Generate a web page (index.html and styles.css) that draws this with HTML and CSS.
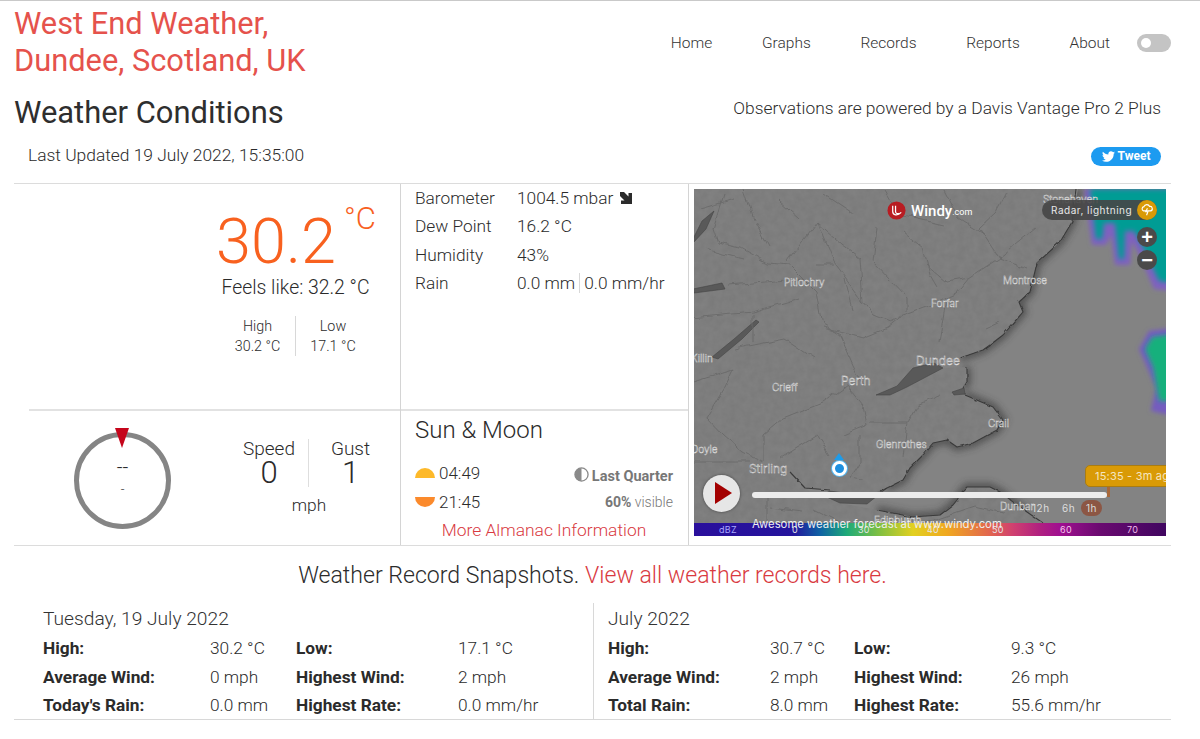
FILE: index.html
```html
<!DOCTYPE html>
<html lang="en">
<head>
<meta charset="utf-8">
<title>West End Weather</title>
<link rel="stylesheet" href="styles.css">
</head>
<body>
<div class="page">
  <header class="top">
    <h1 class="site-title">West End Weather,<br>Dundee, Scotland, UK</h1>
    <nav class="nav">
      <a>Home</a><a>Graphs</a><a>Records</a><a>Reports</a><a>About</a>
      <span class="toggle"><span class="knob"></span></span>
    </nav>
  </header>
  <div class="head-row">
    <h2 class="page-title">Weather Conditions</h2>
    <div class="powered">Observations are powered by a Davis Vantage Pro 2 Plus</div>
  </div>
  <div class="update-row">
    <div class="updated">Last Updated 19 July 2022, 15:35:00</div>
    <a class="tweet"><svg class="bird" viewBox="0 0 24 24"><path d="M23.954 4.569c-.885.389-1.83.654-2.825.775 1.014-.611 1.794-1.574 2.163-2.723-.951.555-2.005.959-3.127 1.184-.896-.959-2.173-1.559-3.591-1.559-2.717 0-4.92 2.203-4.92 4.917 0 .39.045.765.127 1.124C7.691 8.094 4.066 6.13 1.64 3.161c-.427.722-.666 1.561-.666 2.475 0 1.71.87 3.213 2.188 4.096-.807-.026-1.566-.248-2.228-.616v.061c0 2.385 1.693 4.374 3.946 4.827-.413.111-.849.171-1.296.171-.314 0-.615-.03-.916-.086.631 1.953 2.445 3.377 4.604 3.417-1.68 1.319-3.809 2.105-6.102 2.105-.39 0-.779-.023-1.17-.067 2.189 1.394 4.768 2.209 7.557 2.209 9.054 0 13.999-7.496 13.999-13.986 0-.209 0-.42-.015-.63.961-.689 1.8-1.56 2.46-2.548l-.047-.02z"/></svg>Tweet</a>
  </div>

  <section class="panels">
    <div class="left">
      <div class="temp-cell">
        <div class="temp-box">
          <div class="temp"><span class="temp-num">30.2</span><span class="temp-unit">°C</span></div>
          <div class="feels">Feels like: 32.2 °C</div>
          <div class="hilo">
            <div class="hilo-item"><div>High</div><div>30.2 °C</div></div>
            <div class="hilo-item"><div>Low</div><div>17.1 °C</div></div>
          </div>
        </div>
      </div>
      <div class="wind-cell">
        <div class="gauge">
          <span class="gauge-pointer"></span>
          <span class="gauge-main">--</span>
          <span class="gauge-sub">-</span>
        </div>
        <div class="wind">
          <div class="wind-cols">
            <div class="wind-col"><div class="wind-label">Speed</div><div class="wind-val">0</div></div>
            <div class="wind-col"><div class="wind-label">Gust</div><div class="wind-val">1</div></div>
          </div>
          <div class="wind-unit">mph</div>
        </div>
      </div>
    </div>

    <div class="mid">
      <div class="obs">
        <div class="obs-row"><span class="obs-label">Barometer</span><span>1004.5 mbar</span>
          <svg class="trend" viewBox="0 0 12 12"><path d="M0 0 H4 L8.5 4.5 V1 H12 V12 H1 V8.5 H4.5 L0 4 Z"/></svg></div>
        <div class="obs-row"><span class="obs-label">Dew Point</span><span>16.2 °C</span></div>
        <div class="obs-row"><span class="obs-label">Humidity</span><span>43%</span></div>
        <div class="obs-row"><span class="obs-label">Rain</span><span class="rain-a">0.0 mm</span><span class="rain-b">0.0 mm/hr</span></div>
      </div>
      <div class="almanac">
        <h3 class="almanac-title">Sun &amp; Moon</h3>
        <div class="almanac-row">
          <span class="sun-time"><span class="sun sun-up"></span>04:49</span>
          <span class="moon"><svg class="moon-icon" viewBox="0 0 16 16"><circle cx="8" cy="8" r="7" fill="#fff" stroke="#8a8a8a" stroke-width="1.4"/><path d="M8 1a7 7 0 0 0 0 14z" fill="#8a8a8a"/></svg><b>Last Quarter</b></span>
        </div>
        <div class="almanac-row">
          <span class="sun-time"><span class="sun sun-down"></span>21:45</span>
          <span class="visible"><b>60%</b> visible</span>
        </div>
        <a class="more">More Almanac Information</a>
      </div>
    </div>

    <div class="right">
      <div class="map">
        <svg class="map-art" viewBox="0 0 472 347" preserveAspectRatio="none">
          <defs>
            <filter id="blurEdge" filterUnits="userSpaceOnUse" x="340" y="-20" width="160" height="280"><feGaussianBlur stdDeviation="2.2"/></filter>
            <filter id="blurCore" filterUnits="userSpaceOnUse" x="340" y="-20" width="160" height="280"><feGaussianBlur stdDeviation="2.6"/></filter>
            <filter id="shadow" filterUnits="userSpaceOnUse" x="0" y="0" width="472" height="347"><feGaussianBlur stdDeviation="3.5"/></filter>
            <filter id="wiggle" filterUnits="userSpaceOnUse" x="0" y="0" width="472" height="347">
              <feTurbulence type="fractalNoise" baseFrequency=".07" numOctaves="2" seed="4" result="n"/>
              <feDisplacementMap in="SourceGraphic" in2="n" scale="7" xChannelSelector="R" yChannelSelector="G"/>
            </filter>
            <filter id="wiggleFine" filterUnits="userSpaceOnUse" x="0" y="0" width="472" height="347">
              <feTurbulence type="fractalNoise" baseFrequency=".12" numOctaves="2" seed="9" result="n"/>
              <feDisplacementMap in="SourceGraphic" in2="n" scale="3" xChannelSelector="R" yChannelSelector="G"/>
            </filter>
            <filter id="terrain" filterUnits="userSpaceOnUse" x="0" y="0" width="472" height="347" color-interpolation-filters="sRGB">
              <feTurbulence type="fractalNoise" baseFrequency=".14" numOctaves="3" seed="12"/>
              <feColorMatrix type="matrix" values="1.4 0 0 0 -.2  1.4 0 0 0 -.2  1.4 0 0 0 -.2  0 0 0 0 1"/>
            </filter>
            <clipPath id="landClip"><path d="M384 0 L378 33 L366 53 L343 74 L336 103 L325 113 L329 123 L309 146 L296 156 L289 161 L266 169 L245 172 L223 172 L219 179 L203 196 L182 206 L196 206 L213 198 L249 179 L273 178 L273 193 L269 199 L263 201 L256 206 L271 206 L299 218 L309 231 L303 241 L279 254 L263 258 L253 251 L239 254 L229 266 L216 279 L209 291 L193 299 L186 303 L165 306 L136 301 L111 299 L96 283 L118 305 L146 314 L166 318 L183 321 L219 328 L246 326 L259 316 L263 311 L268 303 L273 298 L296 298 L306 303 L333 323 L349 334 L349 347 L0 347 L0 0 Z"/></clipPath>
            <linearGradient id="scale" x1="0" x2="1" y1="0" y2="0">
              <stop offset="0" stop-color="#2a0f9c"/>
              <stop offset=".21" stop-color="#24149c"/>
              <stop offset=".267" stop-color="#0f62a4"/>
              <stop offset=".324" stop-color="#1eaa78"/>
              <stop offset=".394" stop-color="#82c040"/>
              <stop offset=".464" stop-color="#e2d020"/>
              <stop offset=".536" stop-color="#f0a820"/>
              <stop offset=".633" stop-color="#e06052"/>
              <stop offset=".676" stop-color="#d04070"/>
              <stop offset=".733" stop-color="#b02080"/>
              <stop offset=".775" stop-color="#a01090"/>
              <stop offset=".86" stop-color="#6a0a70"/>
              <stop offset="1" stop-color="#400660"/>
            </linearGradient>
          </defs>
          <rect width="472" height="347" fill="#838383"/>
          <!-- radar -->
          <g filter="url(#blurEdge)">
            <path d="M390 0 L480 0 L480 102 L460 100 L447 70 L438 52 L436 76 L421 76 L417 46 L412 56 L398 56 Z" fill="#7f60c0"/>
            <path d="M445 160 L455 142 L480 139 L480 227 L457 222 L462 199 L452 176 Z" fill="#745cc0"/>
          </g>
          <g filter="url(#blurCore)">
            <path d="M396 0 L480 0 L480 94 L465 92 L452 64 L440 42 L431 42 L430 70 L425 70 L421 34 L410 34 L408 50 L402 50 Z" fill="#069c94"/>
            <path d="M451 160 L458 148 L480 145 L480 212 L465 212 L459 178 Z" fill="#12b07c"/>
          </g>
          <!-- coast shadow, then land on top -->
          <path d="M384 0 L378 33 L366 53 L343 74 L336 103 L325 113 L329 123 L309 146 L296 156 L289 161 L266 169 M273 178 L273 193 L269 199 M271 206 L299 218 L309 231 L303 241 L279 254 L263 258 L253 251 L239 254 L229 266 L216 279 L209 291 L193 299 M183 321 L219 328 L246 326 L259 316 L263 311 L268 303 L273 298 L296 298 L306 303 L333 323" fill="none" stroke="#333" stroke-width="8" opacity=".6" filter="url(#shadow)"/>
          <g clip-path="url(#landClip)">
            <rect width="472" height="347" fill="#7e7e7e"/>
            <rect width="472" height="347" filter="url(#terrain)" opacity=".025"/>
          </g>
          <!-- estuaries and lochs -->
          <g fill="#595959" stroke="#454545" stroke-width=".6">
            <path d="M182 206 L203 197 L219 179 L240 174 L249 179 L213 198 L196 206 Z"/>
            <path d="M136 302 L165 306 L186 303 L193 299 L173 315 L146 314 L128 306 Z"/>
            <path d="M-1 100 L28 94 L31 100 L0 104 Z"/>
            <path d="M-1 50 L8 32 L20 22 L12 40 L-1 54 Z"/>
            <path d="M18 168 L40 150 L62 131 L65 133 L48 150 L24 170 Z"/>
            <path d="M258 203 L264 201 L270 199 L271 205 L260 206 Z"/>
          </g>
          <path d="M382 0 L378 33 L366 53 L343 74 L336 103 L325 113 L329 123 L309 146 L296 156 L289 161 L266 169 M273 178 L273 193 L269 199 M271 206 L299 218 L309 231 L303 241 L279 254 L263 258 L253 251 L239 254 L229 266 L216 279 L209 291 L193 299 L186 303 M96 283 L111 299 L136 301 M183 321 L219 328 L246 326 L259 316 L263 311 L268 303 L273 298 L296 298 L306 303 L333 323 L349 334" fill="none" stroke="#3a3a3a" stroke-width="1.1" stroke-linejoin="round" filter="url(#wiggleFine)"/>
          <!-- rivers and roads -->
          <g fill="none" stroke="#6a6a6a" stroke-width=".9" stroke-linejoin="round" filter="url(#wiggle)">
            <path d="M29 6 L19 39 L24 54 L46 59 L73 74 L96 76 L109 89 L123 103 L129 136 L146 146 L159 176 L170 196"/>
            <path d="M123 33 L93 73"/>
            <path d="M123 33 L139 73 L169 113 L179 126 L196 133 L209 126 L236 116 L262 105 L275 89 L305 69 L342 39"/>
            <path d="M139 76 L123 76"/>
            <path d="M169 113 L166 69 L149 56 L123 33"/>
            <path d="M209 43 L229 59 L236 86 L243 98"/>
            <path d="M183 39 L179 73 L213 109 L213 122"/>
            <path d="M129 139 L169 149 L193 139 L209 126"/>
            <path d="M-4 129 L59 123 L106 109"/>
            <path d="M33 96 L73 93 L109 89"/>
            <path d="M59 125 L59 153"/>
            <path d="M0 193 L39 181 L30 200 L13 229 L29 246 L49 263 L69 273"/>
            <path d="M69 273 L69 246 L89 229 L129 213 L153 196"/>
            <path d="M153 196 L169 216 L173 236 L149 246 M166 246 L166 273 L156 289 L169 291"/>
            <path d="M86 269 L123 246 L136 266"/>
            <path d="M-1 273 L56 273"/>
            <path d="M176 233 L213 233 L223 216 L246 206"/>
            <path d="M213 233 L209 269"/>
            <path d="M73 303 L73 333"/>
            <path d="M76 319 L109 323"/>
            <path d="M232 76 L252 93 L275 89"/>
            <path d="M252 113 L245 153"/>
            <path d="M312 3 L302 23 L285 39 L305 69 L332 79"/>
            <path d="M292 139 L305 133"/>
            <path d="M6 20 L40 10 M50 0 L60 30 M85 12 L105 30 M130 5 L160 25 M190 0 L205 25 L250 35"/>
            <path d="M250 0 L265 30 L290 45 M120 320 L150 335 M230 335 L280 318 L310 325"/>
            <path d="M62 33 L75 58 M150 90 L158 120 M10 60 L50 70 M40 160 L90 150 L120 170"/>
          </g>
          <g class="city" font-family="Inter, 'Liberation Sans', sans-serif" fill="#4a4a4a" stroke="#ececec" stroke-width=".4" font-size="10">
            <text x="90" y="97">Pitlochry</text>
            <text x="237" y="118">Forfar</text>
            <text x="309" y="95">Montrose</text>
            <text x="349" y="14">Stonehaven</text>
            <text x="-3" y="173">Killin</text>
            <text x="78" y="202">Crieff</text>
            <text x="-3" y="264">Doyle</text>
            <text x="182" y="259">Glenrothes</text>
            <text x="294" y="238">Crail</text>
            <text x="306" y="321">Dunbar</text>
            <text x="180" y="335">Edinburgh</text>
            <text x="222" y="176" font-size="12">Dundee</text>
            <text x="147" y="196" font-size="12">Perth</text>
            <text x="55" y="284" font-size="12">Stirling</text>
          </g>
          <rect y="334" width="472" height="13" fill="url(#scale)"/>
        </svg>

        <div class="windy-logo"><svg class="windy-mark" viewBox="0 0 20 20"><circle cx="10" cy="10" r="9.5" fill="#b81c22"/><path d="M6 5 V11 C6 15 11 16 15 12 M9 5 V11 C9 13 11 14 13 13" fill="none" stroke="#fff" stroke-width="1.3"/></svg><b>Windy</b><small>.com</small></div>
        <div class="layer-pill"><span>Radar, lightning</span><span class="layer-btn"><svg viewBox="0 0 16 16"><path d="M4 9 A2.5 2.5 0 0 1 4.5 4.2 A3.5 3.5 0 0 1 11 4 A2.5 2.5 0 0 1 12 9 Z" fill="none" stroke="#fff" stroke-width="1.3"/><path d="M8.5 6 L6.5 10 H9 L7.5 14" fill="none" stroke="#fff" stroke-width="1.3"/></svg></span></div>
        <span class="zoom zoom-in">+</span>
        <span class="zoom zoom-out">−</span>
        <span class="loc-arrow"></span>
        <span class="loc-dot"></span>
        <span class="play"><span class="play-tri"></span></span>
        <span class="slider"></span>
        <span class="slider-tick"></span>
        <span class="timecode">15:35 - 3m ago</span>
        <span class="range r12">12h</span>
        <span class="range r6">6h</span>
        <span class="range r1">1h</span>
        <span class="tick t0">dBZ</span><span class="tick t1">0</span><span class="tick t2">30</span><span class="tick t3">40</span><span class="tick t4">50</span><span class="tick t5">60</span><span class="tick t6">70</span>
        <span class="promo">Awesome weather forecast at www.windy.com</span>
      </div>
    </div>
  </section>

  <h3 class="rec-title">Weather Record Snapshots. <a>View all weather records here.</a></h3>

  <section class="records">
    <div class="rec rec-day">
      <h4>Tuesday, 19 July 2022</h4>
      <div class="rec-grid">
        <b>High:</b><span>30.2 °C</span><b>Low:</b><span>17.1 °C</span>
        <b>Average Wind:</b><span>0 mph</span><b>Highest Wind:</b><span>2 mph</span>
        <b>Today's Rain:</b><span>0.0 mm</span><b>Highest Rate:</b><span>0.0 mm/hr</span>
      </div>
    </div>
    <div class="rec rec-month">
      <h4>July 2022</h4>
      <div class="rec-grid">
        <b>High:</b><span>30.7 °C</span><b>Low:</b><span>9.3 °C</span>
        <b>Average Wind:</b><span>2 mph</span><b>Highest Wind:</b><span>26 mph</span>
        <b>Total Rain:</b><span>8.0 mm</span><b>Highest Rate:</b><span>55.6 mm/hr</span>
      </div>
    </div>
  </section>
</div>
</body>
</html>
```
FILE: styles.css
```css
* { box-sizing: border-box; }
html, body { margin: 0; height: 739px; overflow: hidden; background: #fff; }
body { font-family: Roboto, "Liberation Sans", sans-serif; font-weight: 300; color: #2b2b2b; border-top: 1px solid #c9c9c9; }
h1, h2, h3, h4 { margin: 0; font-weight: 300; }
.page { padding: 0 29px 0 14px; width: 1200px; }

.top { display: flex; justify-content: space-between; height: 96px; }
.site-title { font-size: 30.8px; font-weight: 400; line-height: 37px; color: #e5524c; padding-top: 4px; }
.nav { display: flex; align-items: center; height: 84px; font-size: 15.5px; gap: 49.7px; }
.nav a { color: #333; }
.toggle { width: 34px; height: 18px; border-radius: 9px; background: #c4c4c4; margin-left: -22.7px; padding: 4px; display: flex; }
.knob { width: 10px; height: 10px; border-radius: 50%; background: #fff; }

.head-row { display: flex; justify-content: space-between; align-items: center; height: 32px; padding-right: 10px; }
.page-title { font-size: 30.9px; font-weight: 400; color: #2e2e2e; margin-top: -2px; }
.powered { font-size: 17.35px; margin-top: -11px; }

.update-row { display: flex; justify-content: space-between; align-items: center; height: 54px; padding: 0 10px 0 14px; }
.updated { font-size: 17.4px; margin-top: -2px; }
.tweet { display: flex; align-items: center; justify-content: center; gap: 3px; width: 70px; height: 19px; border-radius: 10px; background: #1d9bf0; color: #fff; font-size: 12px; font-weight: 700; }
.bird { width: 13px; height: 13px; fill: #fff; }

.panels { display: grid; grid-template-columns: 386px 289px 482px; height: 363px; border-top: 1px solid #dcdcdc; border-bottom: 1px solid #dcdcdc; }
.left { display: flex; flex-direction: column; }
.temp-cell { height: 225px; display: flex; justify-content: flex-end; padding-right: 25px; }
.temp-box { width: 157px; display: flex; flex-direction: column; align-items: center; }
.temp { display: flex; align-items: flex-start; height: 73px; color: #f8611f; margin: 20px 0 0 -2px; width: 159px; }
.temp-num { font-size: 63px; line-height: 76px; }
.temp-unit { font-size: 31px; line-height: 30px; margin-left: 8px; }
.feels { font-size: 19.4px; line-height: 22px; white-space: nowrap; margin-right: 2px; }
.hilo { display: flex; margin: 17px 3px 0 0; font-size: 14.3px; line-height: 20px; text-align: center; }
.hilo-item { width: 75px; }
.hilo-item + .hilo-item { border-left: 1px solid #d8d8d8; }

.wind-cell { flex: 1; margin-left: 15px; border-top: 2px solid #e2e2e2; display: flex; padding-left: 45px; }
.gauge { position: relative; width: 97px; height: 97px; margin-top: 21px; border: 5px solid #858585; border-radius: 50%; display: flex; flex-direction: column; align-items: center; justify-content: center; }
.gauge-pointer { position: absolute; top: -9px; left: 36px; border-left: 7px solid transparent; border-right: 7px solid transparent; border-top: 20px solid #c5051b; }
.gauge-main { font-size: 20px; line-height: 20px; margin-top: -4px; }
.gauge-sub { font-size: 13px; line-height: 20px; margin-top: 3px; }
.wind { margin-left: 71px; margin-top: 28px; width: 132px; text-align: center; }
.wind-cols { display: flex; }
.wind-col { width: 66px; height: 48px; }
.wind-col + .wind-col { border-left: 1px solid #dedede; padding-left: 18px; }
.wind-col:first-child { padding-right: 12px; }
.wind-label { font-size: 19px; line-height: 20px; }
.wind-val { font-size: 31px; line-height: 29px; margin-top: -1px; }
.wind-unit { font-size: 17.3px; margin: 8px 0 0 2px; }

.mid { display: flex; flex-direction: column; border-left: 1px solid #d4d4d4; border-right: 1px solid #d4d4d4; }
.obs { height: 225px; padding: 0 0 0 14px; }
.obs-row { display: flex; align-items: center; height: 28.3px; font-size: 17.3px; }
.obs-label { width: 102px; }
.trend { width: 12px; height: 12px; margin-left: 7px; fill: #2b2b2b; }
.rain-a { padding-right: 4px; border-right: 1px solid #d8d8d8; }
.rain-b { padding-left: 4px; }
.almanac { flex: 1; border-top: 2px solid #e2e2e2; padding: 0 15px 0 14px; }
.almanac-title { font-size: 24px; line-height: 38px; margin-bottom: 9px; }
.almanac-row { display: flex; justify-content: space-between; align-items: center; height: 29px; font-size: 17px; }
.sun-time { display: flex; align-items: center; gap: 4px; font-size: 17px; }
.sun { width: 20px; height: 10px; display: block; }
.sun-up { background: #fdb92a; border-radius: 10px 10px 0 0; }
.sun-down { background: #fb8a2c; border-radius: 0 0 10px 10px; }
.moon { display: flex; align-items: center; gap: 3px; font-size: 14.5px; color: #777; margin-top: 8px; }
.moon b, .visible b { font-weight: 700; }
.moon-icon { width: 15px; height: 15px; margin-top: -4px; }
.visible { font-size: 14px; color: #777; }
.more { display: block; text-align: center; color: #d93a3f; font-size: 17.4px; line-height: 22px; margin-top: 3px; }

.right { padding: 5px 0 0 5px; }
.map { position: relative; width: 472px; height: 347px; overflow: hidden; background: #7f7f7f; }
.map-art { display: block; width: 472px; height: 347px; }
.windy-logo { position: absolute; left: 193px; top: 12px; display: flex; align-items: center; gap: 5px; color: #fff; font-size: 15px; }
.windy-logo b { font-weight: 500; }
.windy-logo small { font-size: 9px; margin: 3px 0 0 -5px; font-weight: 400; }
.windy-mark { width: 19px; height: 19px; }
.layer-pill { position: absolute; left: 348px; top: 11px; width: 115px; height: 20px; background: rgba(70,70,70,.9); border-radius: 10px; color: #e8e8e8; font: 400 10px/20px Inter, sans-serif; letter-spacing: .5px; padding-left: 9px; }
.layer-btn { position: absolute; right: 0; top: 0; width: 20px; height: 20px; border-radius: 50%; background: #d99a06; display: flex; align-items: center; justify-content: center; }
.layer-btn svg { width: 14px; height: 14px; }
.zoom { position: absolute; left: 443px; width: 20px; height: 20px; border-radius: 50%; background: #4a4a4a; color: #fff; font: 700 20px/20px "Liberation Sans", sans-serif; text-align: center; }
.zoom-in { top: 38px; }
.zoom-out { top: 61px; }
.loc-arrow { position: absolute; left: 140px; top: 264px; border-left: 5px solid transparent; border-right: 5px solid transparent; border-bottom: 7px solid #1e9be8; }
.loc-dot { position: absolute; left: 138px; top: 272px; width: 15px; height: 15px; border-radius: 50%; background: #1e90e0; border: 3px solid #fff; box-shadow: 0 0 0 1px #55b6f0; }
.play { position: absolute; left: 9px; top: 286px; width: 37px; height: 37px; border-radius: 50%; background: #e6e6e6; box-shadow: 0 0 3px #444; }
.play-tri { position: absolute; left: 12px; top: 7px; border-left: 17px solid #a30000; border-top: 11.5px solid transparent; border-bottom: 11.5px solid transparent; }
.slider { position: absolute; left: 58px; top: 303px; width: 355px; height: 6px; border-radius: 3px; background: #ececec; }
.slider-tick { position: absolute; left: 413px; top: 298px; width: 3px; height: 10px; background: #a8683a; }
.timecode { position: absolute; left: 391px; top: 276px; width: 110px; height: 22px; border-radius: 5px; border: 1px solid #a97c12; background: #d99a06; color: #f5e6c0; font: 400 11px/20px Inter, sans-serif; letter-spacing: .2px; padding-left: 9px; white-space: nowrap; }
.range { position: absolute; top: 311px; color: #ddd; font: 400 10px/16px Inter, sans-serif; padding: 0 5px; letter-spacing: .5px; }
.r12 { left: 333px; }
.r6 { left: 363px; }
.r1 { left: 387px; background: #8c5644; border-radius: 8px; }
.tick { position: absolute; top: 335px; color: #e6e6e6; font: 400 9px/12px Inter, sans-serif; letter-spacing: .3px; }
.t0 { left: 25px; color: #a8a8ff; }
.t1 { left: 98px; }
.t2 { left: 164px; }
.t3 { left: 233px; }
.t4 { left: 298px; }
.t5 { left: 366px; color: #f5c8ee; }
.t6 { left: 433px; color: #eeb8e8; }
.promo { position: absolute; left: 58px; top: 327px; color: #eee; font: 400 11.3px/16px Inter, "Liberation Sans", sans-serif; white-space: nowrap; }

.rec-title { font-size: 23.1px; line-height: 30px; text-align: center; margin-top: 15px; }
.rec-title a { color: #d93a3f; }
.records { display: grid; grid-template-columns: 579px 578px; height: 117px; margin-top: 12px; border-bottom: 1px solid #d8d8d8; }
.rec { padding: 4px 0 0 29px; }
.rec-month { border-left: 1px solid #d8d8d8; padding-left: 14px; }
.rec h4 { font-size: 19.2px; line-height: 24px; color: #333; }
.rec-grid { display: grid; font-size: 17.3px; grid-auto-rows: 28.6px; align-items: center; margin-top: 3px; }
.rec-day .rec-grid { grid-template-columns: 167px 86px 162px auto; }
.rec-month .rec-grid { grid-template-columns: 162px 84px 157px auto; }
.rec-grid b { font-weight: 700; color: #2b2b2b; }
```
